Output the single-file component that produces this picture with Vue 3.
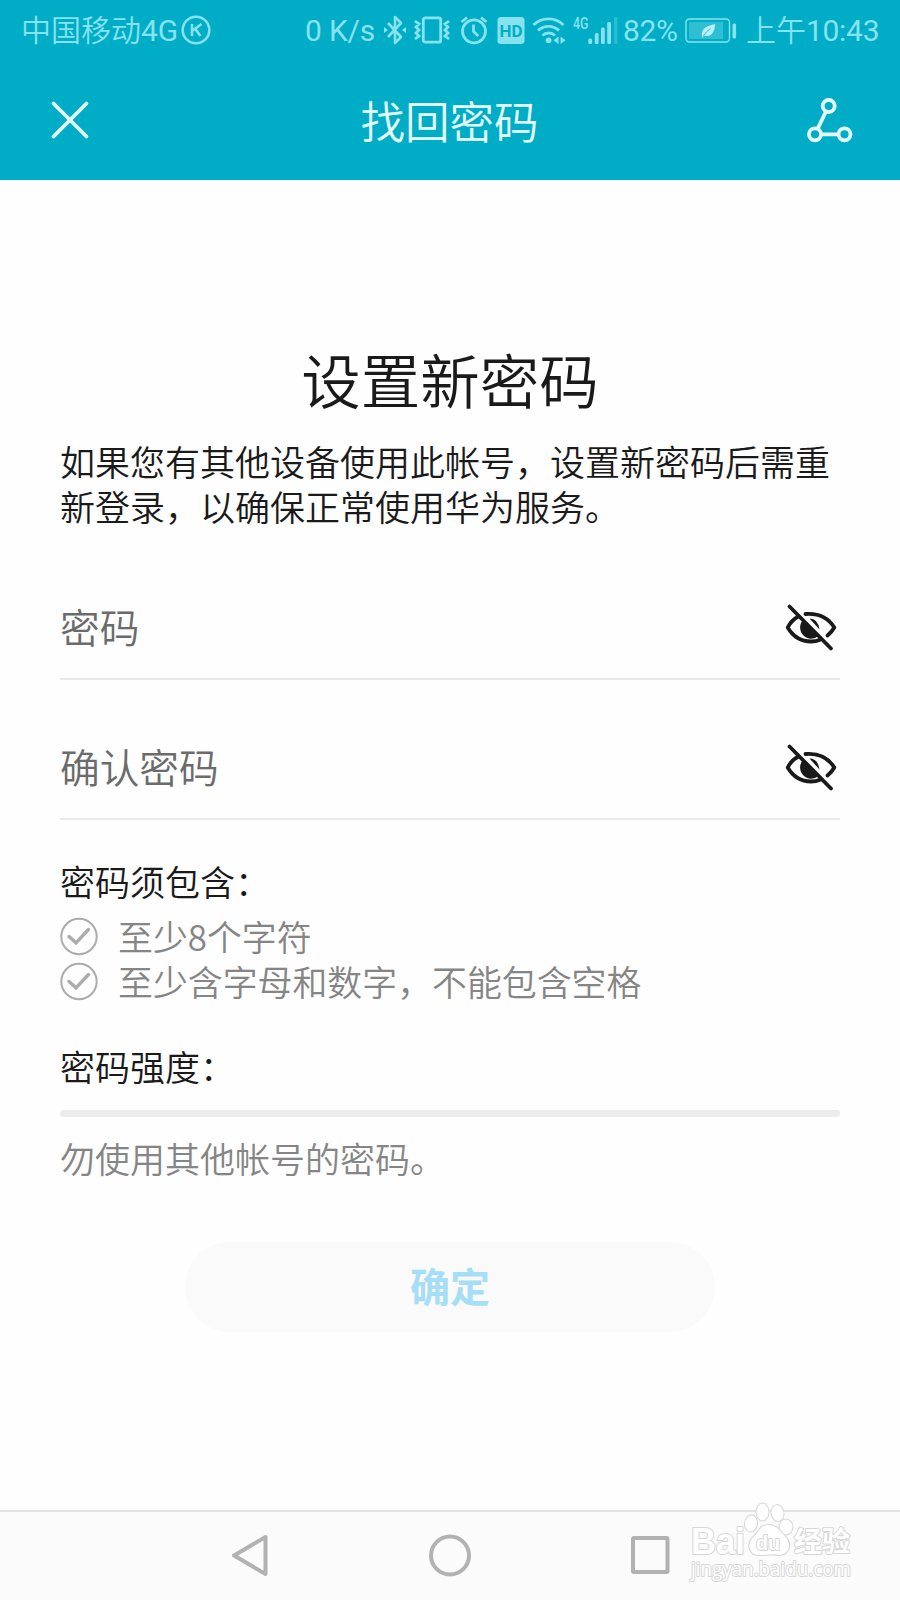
<template>
  <div class="screen">
    <header class="top">
      <div class="status">
        <span class="carrier">中国移动<b>4G</b></span>
        <svg class="badge" width="30" height="30" viewBox="0 0 30 30">
          <circle cx="15" cy="15" r="13.3" fill="none" stroke="currentColor" stroke-width="2.6" />
          <path d="M11 9v12M20.500 9l-9.500 7M14 13.500l5.500 7.500" fill="none" stroke="currentColor" stroke-width="2.6" />
        </svg>

        <span class="speed">0 K/s</span>
        <!-- bluetooth -->
        <svg class="bt" width="24" height="30" viewBox="0 0 24 30">
          <path d="M5 8l13 14-6 6V2l6 6L5 22" fill="none" stroke="currentColor" stroke-width="2.6" stroke-linejoin="round" />
          <path d="M1 12l4 3-4 3zM23 12l-4 3 4 3z" fill="currentColor" />
        </svg>
        <!-- vibrate -->
        <svg class="vib" width="36" height="30" viewBox="0 0 36 30">
          <rect x="9.3" y="2.8" width="17.4" height="24.4" rx="2" fill="none" stroke="currentColor" stroke-width="2.8" />
          <path d="M1 6l4 3-3 3 3 3-3 3 3 3-4 3M35 6l-4 3 3 3-3 3 3 3-3 3 4 3" fill="none" stroke="currentColor" stroke-width="2.8" />
        </svg>
        <!-- alarm -->
        <svg class="alarm" width="28" height="30" viewBox="0 0 28 30">
          <circle cx="14" cy="16.3" r="11.5" fill="none" stroke="currentColor" stroke-width="2.8" />
          <path d="M13.5 9.5v7l4.8 4.5M1.5 7l5.5-4.5M26.5 7L21 2.5" fill="none" stroke="currentColor" stroke-width="2.8" />
        </svg>
        <!-- HD -->
        <svg class="hd" width="28" height="30" viewBox="0 0 28 30">
          <rect x="0.5" y="2" width="27" height="27" rx="3.5" fill="currentColor" />
          <text x="14" y="21.8" text-anchor="middle" textLength="23" lengthAdjust="spacingAndGlyphs" class="hd-text">HD</text>
        </svg>
        <!-- wifi -->
        <svg class="wifi" width="34" height="30" viewBox="0 0 34 30">
          <path d="M1.5 10a21.5 21.5 0 0 1 30 0M6 15.5a15.2 15.2 0 0 1 21 0M10.5 20.5a9 9 0 0 1 12.5 0" fill="none" stroke="currentColor" stroke-width="2.8" />
          <circle cx="16.6" cy="25.3" r="2.9" fill="currentColor" />
          <path d="M26.500 21.500v7.500l-5-3.700zM28.500 21.500v7.500l5-3.700z" fill="currentColor" />
        </svg>
        <!-- signal -->
        <svg class="signal" width="46" height="30" viewBox="0 0 46 30">
          <text x="1" y="13.5" textLength="15.5" lengthAdjust="spacingAndGlyphs" class="net-text">4G</text>
          <g fill="currentColor">
            <rect x="16.3" y="23.5" width="3.8" height="5.5" rx="1.5" />
            <rect x="22.8" y="18" width="3.8" height="11" rx="1.5" />
            <rect x="29" y="12.5" width="3.8" height="16.5" rx="1.5" />
            <rect x="35.2" y="7" width="3.8" height="22" rx="1.5" />
            <rect x="42" y="2" width="3.4" height="27" rx="1" opacity=".3" />
          </g>
        </svg>
        <span class="percent">82%</span>
        <!-- battery -->
        <svg class="battery" width="52" height="30" viewBox="0 0 52 30">
          <rect x="1" y="4" width="43.5" height="23" rx="3.5" fill="none" stroke="currentColor" stroke-width="1.4" />
          <rect x="4" y="7" width="34" height="17" fill="currentColor" opacity=".35" />
          <rect x="47.5" y="8.5" width="3.6" height="15" rx="1.5" fill="currentColor" />
          <path d="M17 22c-1-8 3-10.500 13-13 0 8-4 14-11 11.500l-1.500 2.500z" fill="#b5f1f7" />
          <path d="M18 21.500q3-5 7.500-8" fill="none" stroke="#3fbfd1" stroke-width="1" />
        </svg>
        <span class="clock">上午<b>10:43</b></span>
      </div>

      <div class="nav">
        <svg width="40" height="40" viewBox="0 0 40 40">
          <path d="M3.500 3.500l33 33M36.500 3.500l-33 33" stroke="currentColor" stroke-width="3.800" stroke-linecap="round" />
        </svg>
        <h1>找回密码</h1>
        <svg width="46" height="46" viewBox="0 0 46 46">
          <g fill="none" stroke="currentColor" stroke-width="3.800">
            <circle cx="21.700" cy="9" r="6" />
            <circle cx="8" cy="37.300" r="6" />
            <circle cx="37.500" cy="37.300" r="6" />
            <path d="M19 14.500L10.500 31.800M14 37.300h17.500" />
          </g>
        </svg>
      </div>
    </header>

    <main class="content">
      <h2>设置新密码</h2>
      <p class="desc">如果您有其他设备使用此帐号，设置新密码后需重新登录，以确保正常使用华为服务。</p>

      <div v-for="label in fields" :key="label" class="field">
        <span>{{ label }}</span>
        <svg width="52" height="48" viewBox="0 0 52 48">
          <g fill="none" stroke="currentColor" stroke-width="3.800" stroke-linecap="round" stroke-linejoin="round">
            <path d="M4.500 3.500L46 45.500" />
            <path d="M13.500 13.500Q6.500 17 2.700 24.500 11 38.500 26 38.500q5 0 9-1.700" />
            <path d="M20.500 11Q40 9.500 49.300 24.500q-2.500 4.500-6.800 8" />
          </g>
          <path d="M18.500 16.500a9.500 9.500 0 1 0 15.500 16zM24.500 15.500q8.500 0 10 11z" fill="currentColor" />
        </svg>
      </div>

      <h3 class="rules-title">密码须包含：</h3>
      <ul class="rules">
        <li v-for="rule in rules" :key="rule">
          <svg width="38" height="38" viewBox="0 0 38 38">
            <circle cx="19" cy="18.500" r="17.700" fill="none" stroke="currentColor" stroke-width="2" />
            <path d="M9 18.500l7 6.300L28.500 11.500" fill="none" stroke="currentColor" stroke-width="3.400" stroke-linecap="round" />
          </svg>
          <span>{{ rule }}</span>
        </li>
      </ul>

      <h3 class="strength-title">密码强度：</h3>
      <div class="strength"></div>
      <p class="hint">勿使用其他帐号的密码。</p>

      <button class="submit" disabled>确定</button>
    </main>

    <footer class="keys">
      <svg width="46" height="46" viewBox="0 0 46 46">
        <path d="M38.500 4v37L7 22.500z" />
      </svg>
      <svg width="46" height="46" viewBox="0 0 46 46">
        <circle cx="23" cy="22.500" r="19" />
      </svg>
      <svg width="46" height="46" viewBox="0 0 46 46">
        <rect x="6" y="5" width="34.500" height="34" rx="1" />
      </svg>
    </footer>

    <svg class="watermark" width="170" height="84" viewBox="0 0 170 84">
      <g fill="#fff" stroke="#d6d6d6" stroke-width="2" stroke-linejoin="round" paint-order="stroke">
        <text x="1" y="50.500" class="wm-logo" textLength="54" lengthAdjust="spacingAndGlyphs">Bai</text>
        <ellipse cx="61" cy="20.500" rx="6" ry="8" transform="rotate(8 61 20.500)" />
        <ellipse cx="72.500" cy="9" rx="6" ry="8.500" />
        <ellipse cx="87.500" cy="10" rx="6" ry="8" transform="rotate(-10 87.500 10)" />
        <ellipse cx="96" cy="24" rx="6.500" ry="7.500" />
        <path d="M78.500 22c-9 0-9 7-15 12-7 6-5 18 5 18 5 0 15-1 20 0 10 1 14-11 7-18-5-5-8-12-17-12z" />
        <text x="66" y="46.500" class="wm-du" textLength="24" lengthAdjust="spacingAndGlyphs">du</text>
        <text x="104" y="49" class="wm-cn" textLength="56" lengthAdjust="spacingAndGlyphs">经验</text>
        <text x="1" y="72.500" class="wm-url" textLength="160" lengthAdjust="spacingAndGlyphs">jingyan.baidu.com</text>
      </g>
    </svg>
  </div>
</template>

<script setup>
const fields = ['密码', '确认密码']
const rules = ['至少8个字符', '至少含字母和数字，不能包含空格']
</script>

<style>
body {
  margin: 0;
}
</style>

<style scoped>
.screen {
  position: relative;
  display: flex;
  flex-direction: column;
  width: 900px;
  height: 1600px;
  overflow: hidden;
  background: #fefefe;
  color: #1a1a1a;
  font-family: "Noto Sans CJK SC", sans-serif;
  font-weight: 350;
}

svg {
  display: block;
  flex: none;
  overflow: visible;
}

h1, h2, h3, p, ul {
  margin: 0;
  padding: 0;
  font-weight: inherit;
}

.top {
  height: 180px;
  background: #00acc6;
}

.status {
  display: flex;
  align-items: center;
  height: 60px;
  padding: 0 21px;
  box-sizing: border-box;
  color: #86e3ee;
  font: 400 30px/60px Roboto, "Noto Sans CJK SC", sans-serif;
  white-space: nowrap;
}

.status span {
  flex: none;
  padding-top: 2px;
}

.carrier,
.clock {
  font-weight: 350;
}

.status b {
  font-weight: 400;
}

.carrier {
  width: 160px;
}

.speed {
  width: 70px;
  margin-left: 94px;
  letter-spacing: -0.2px;
}

.percent {
  width: 56px;
  margin-left: 5px;
  letter-spacing: -0.4px;
}

.clock {
  margin-left: 9px;
}

.clock b {
  letter-spacing: -0.3px;
}

.bt { margin-left: 8px; }
.vib { margin-left: 7px; }
.alarm { margin-left: 10px; }
.hd { margin-left: 9px; }
.wifi { margin-left: 7px; }
.signal { margin-left: 6px; }
.battery { margin-left: 6px; }

.hd-text {
  fill: #00acc6;
  font: bold 17px Roboto, sans-serif;
}

.net-text {
  fill: currentColor;
  font: 500 16px/1 Roboto, sans-serif;
}

.nav {
  display: flex;
  align-items: center;
  justify-content: space-between;
  height: 120px;
  padding: 0 47px 0 50px;
  color: #e4ffff;
}

.nav h1 {
  font-size: 44.5px;
  line-height: 60px;
  margin-top: -1px;
  margin-left: 2px;
}

.content {
  display: flex;
  flex-direction: column;
  flex: 1;
  padding: 163px 60px 0;
}

h2 {
  height: 70px;
  font-size: 59.5px;
  line-height: 70px;
  text-align: center;
}

.desc {
  width: 790px;
  margin-top: 25px;
  font-size: 35px;
  line-height: 45px;
}

.field {
  display: flex;
  justify-content: space-between;
  align-items: flex-end;
  height: 140px;
  padding: 0 3px 27px 0;
  box-sizing: border-box;
  border-bottom: 2px solid #e9e9e9;
}

.field:first-of-type {
  margin-top: 12px;
}

.field span {
  color: #6b6b6b;
  font-size: 39.7px;
  line-height: 51px;
}

.rules-title,
.strength-title {
  font-size: 35px;
  line-height: 45px;
}

.rules-title {
  margin-top: 38px;
}

.rules {
  margin-top: 11px;
  list-style: none;
}

.rules li {
  display: flex;
  align-items: center;
  gap: 20px;
  height: 45px;
  color: #858585;
  font-size: 34.9px;
  line-height: 45px;
}

.rules svg {
  color: #acacac;
}

.strength-title {
  margin-top: 39px;
}

.strength {
  height: 7px;
  margin-top: 22px;
  border-radius: 4px;
  background: #ececec;
}

.hint {
  margin-top: 18px;
  color: #858585;
  font-size: 35px;
  line-height: 45px;
}

.submit {
  align-self: center;
  width: 530px;
  height: 90px;
  margin-top: 62px;
  padding: 0 0 4px;
  border: 0;
  border-radius: 45px;
  background: #fafafa;
  color: #a5def6;
  font: bold 40px/80px "Noto Sans CJK SC", sans-serif;
}

.keys {
  display: flex;
  justify-content: center;
  gap: 154px;
  height: 90px;
  padding-top: 21px;
  box-sizing: border-box;
  border-top: 2px solid #e2e2e2;
  background: #fbfbfb;
}

.keys svg {
  fill: none;
  stroke: #b2b2b2;
  stroke-width: 4;
  stroke-linejoin: round;
}

/* overlay mark above the key bar */
.watermark {
  position: absolute;
  left: 690px;
  top: 1503px;
}

.wm-logo {
  font: bold 36px "Liberation Sans", sans-serif;
}

.wm-du {
  font: bold 20px "Liberation Sans", sans-serif;
}

.wm-cn {
  font: bold 28px "Noto Sans CJK SC", sans-serif;
}

.wm-url {
  font: 20px "Open Sans", sans-serif;
}
</style>
